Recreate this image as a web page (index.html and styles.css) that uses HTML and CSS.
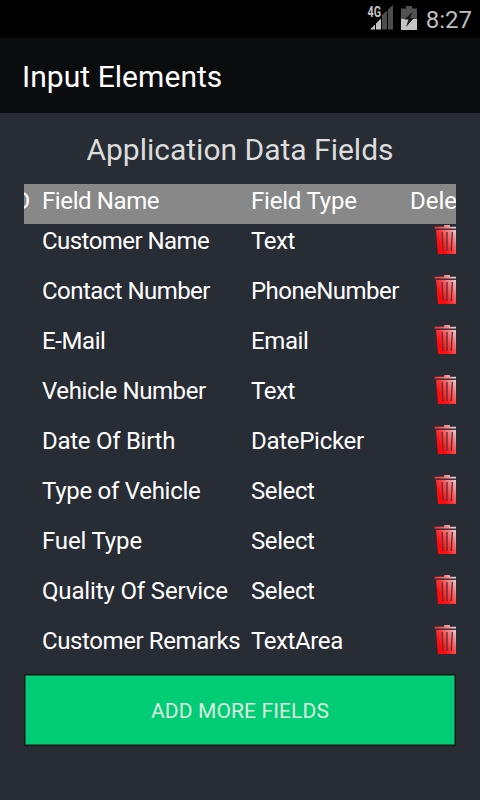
FILE: index.html
```html
<!DOCTYPE html>
<html lang="en">
<head>
<meta charset="utf-8">
<title>Input Elements</title>
<link rel="stylesheet" href="styles.css">
</head>
<body>
<svg width="0" height="0" class="defs" aria-hidden="true">
  <defs>
    <linearGradient id="red" gradientUnits="userSpaceOnUse" x1="5" y1="19" x2="24" y2="7">
      <stop offset="0" stop-color="#ff0a0c"/>
      <stop offset="0.35" stop-color="#fb4044"/>
      <stop offset="0.7" stop-color="#ef9294"/>
      <stop offset="1" stop-color="#e0dcde"/>
    </linearGradient>
    <symbol id="trash" viewBox="0 0 26 30">
      <path fill="url(#red)" d="M0.5 2.700H10V1.700Q10 1 10.700 1H15.300Q16 1 16 1.700V2.700H25.500V4.700H0.500ZM2 6H24L22.500 30H4Z"/>
      <path d="M1 5.200H25" stroke="#54323a" stroke-width="1.100"/>
      <path d="M8 8L9 27M13 8V27M18.300 8L17.300 27" fill="none" stroke="#63303a" stroke-width="1.400"/>
    </symbol>
  </defs>
</svg>
<header class="status">
  <svg class="signal" width="27" height="26" viewBox="0 0 27 26">
    <path fill="#4d4d4d" d="M15 10L20 5.500V24.500H15ZM21 4.500L26 0V24.500H21Z"/>
    <path fill="#c4c4c4" d="M3 24.500L8 19.500V24.500ZM9 18.500L14 13.500V24.500H9Z"/>
    <text class="net" x="0.500" y="12.300" textLength="13.500" lengthAdjust="spacingAndGlyphs">4G</text>
  </svg>
  <svg class="battery" width="16" height="24" viewBox="0 0 16 24">
    <path fill="#505050" d="M0 2.500H5V0H11V2.500H16V13H0Z"/>
    <path fill="#c4c4c4" d="M0 13H16V24H0Z"/>
    <path fill="#171717" d="M11.500 6L3.500 13.500H7.500L5 21L13 12H9Z"/>
  </svg>
  <span class="clock">8:27</span>
</header>
<div class="bar"><h1>Input Elements</h1></div>
<main>
  <h2><span>Application Data Fields</span></h2>
  <div class="table">
    <div class="row head"><span class="id">ID</span><span class="name">Field Name</span><span class="type">Field Type</span><span class="del">Delete</span></div>
    <div class="row"><span class="name tight">Customer Name</span><span class="type">Text</span><svg class="trash"><use href="#trash"/></svg></div>
    <div class="row"><span class="name tight">Contact Number</span><span class="type tight">PhoneNumber</span><svg class="trash"><use href="#trash"/></svg></div>
    <div class="row"><span class="name">E-Mail</span><span class="type">Email</span><svg class="trash"><use href="#trash"/></svg></div>
    <div class="row"><span class="name">Vehicle Number</span><span class="type">Text</span><svg class="trash"><use href="#trash"/></svg></div>
    <div class="row"><span class="name loose">Date Of Birth</span><span class="type loose">DatePicker</span><svg class="trash"><use href="#trash"/></svg></div>
    <div class="row"><span class="name loose">Type of Vehicle</span><span class="type">Select</span><svg class="trash"><use href="#trash"/></svg></div>
    <div class="row"><span class="name loosest">Fuel Type</span><span class="type">Select</span><svg class="trash"><use href="#trash"/></svg></div>
    <div class="row"><span class="name loosest">Quality Of Service</span><span class="type">Select</span><svg class="trash"><use href="#trash"/></svg></div>
    <div class="row"><span class="name">Customer Remarks</span><span class="type">TextArea</span><svg class="trash"><use href="#trash"/></svg></div>
  </div>
  <button class="add">ADD MORE FIELDS</button>
</main>
</body>
</html>
```
FILE: styles.css
```css
* { box-sizing: border-box; }
body {
  margin: 0;
  height: 800px;
  overflow: hidden;
  background: #282c35;
  color: #fff;
  font-family: Roboto, sans-serif;
}
.defs { display: block; }
.status {
  height: 38px;
  background: #000;
  display: flex;
  padding: 0 8px 0 0;
  justify-content: flex-end;
}
.signal { margin: 5px 7px 0 0; }
.net {
  font: bold 14.500px Roboto, sans-serif;
  fill: #c4c4c4;
}
.battery { margin: 6px 9px 0 0; }
.clock {
  color: #bebebe;
  font-size: 24px;
  line-height: 40px;
}
.bar {
  height: 75px;
  background: #0b0c0e;
  padding-left: 22px;
}
h1, h2 { margin: 0; font-weight: 400; }
h1 { font-size: 30px; line-height: 77px; letter-spacing: 0.05px; }
main { padding: 0 24px; }
h2 {
  height: 71px;
  padding-top: 1px;
  color: #dcdcdc;
  font-size: 30px;
  line-height: 72px;
  text-align: center;
}
.table { overflow: hidden; }
.row {
  display: grid;
  grid-template-columns: 18px 209px 159px 60px;
  height: 50px;
  font-size: 24px;
  line-height: 35px;
  white-space: nowrap;
}
.head { height: 40px; background: #888; }
.id { margin-left: -16px; }
.name { grid-column: 2; letter-spacing: -0.4px; }
.type { grid-column: 3; letter-spacing: -0.4px; }
.head .type { letter-spacing: -0.2px; }
.row .tight { letter-spacing: -0.550px; }
.row .loose { letter-spacing: -0.280px; }
.row .loosest { letter-spacing: -0.150px; }
.trash {
  grid-column: 4;
  width: 26px;
  height: 30px;
  margin-left: 24px;
}
.add {
  display: block;
  width: 100%;
  height: 72px;
  padding: 2px 0 0;
  border: 1px solid #111318;
  outline: 1px solid #08743f;
  outline-offset: -2px;
  background: #02cc76;
  color: #dcecdf;
  font: 21px Roboto, sans-serif;
  letter-spacing: 0.120px;
}
```
